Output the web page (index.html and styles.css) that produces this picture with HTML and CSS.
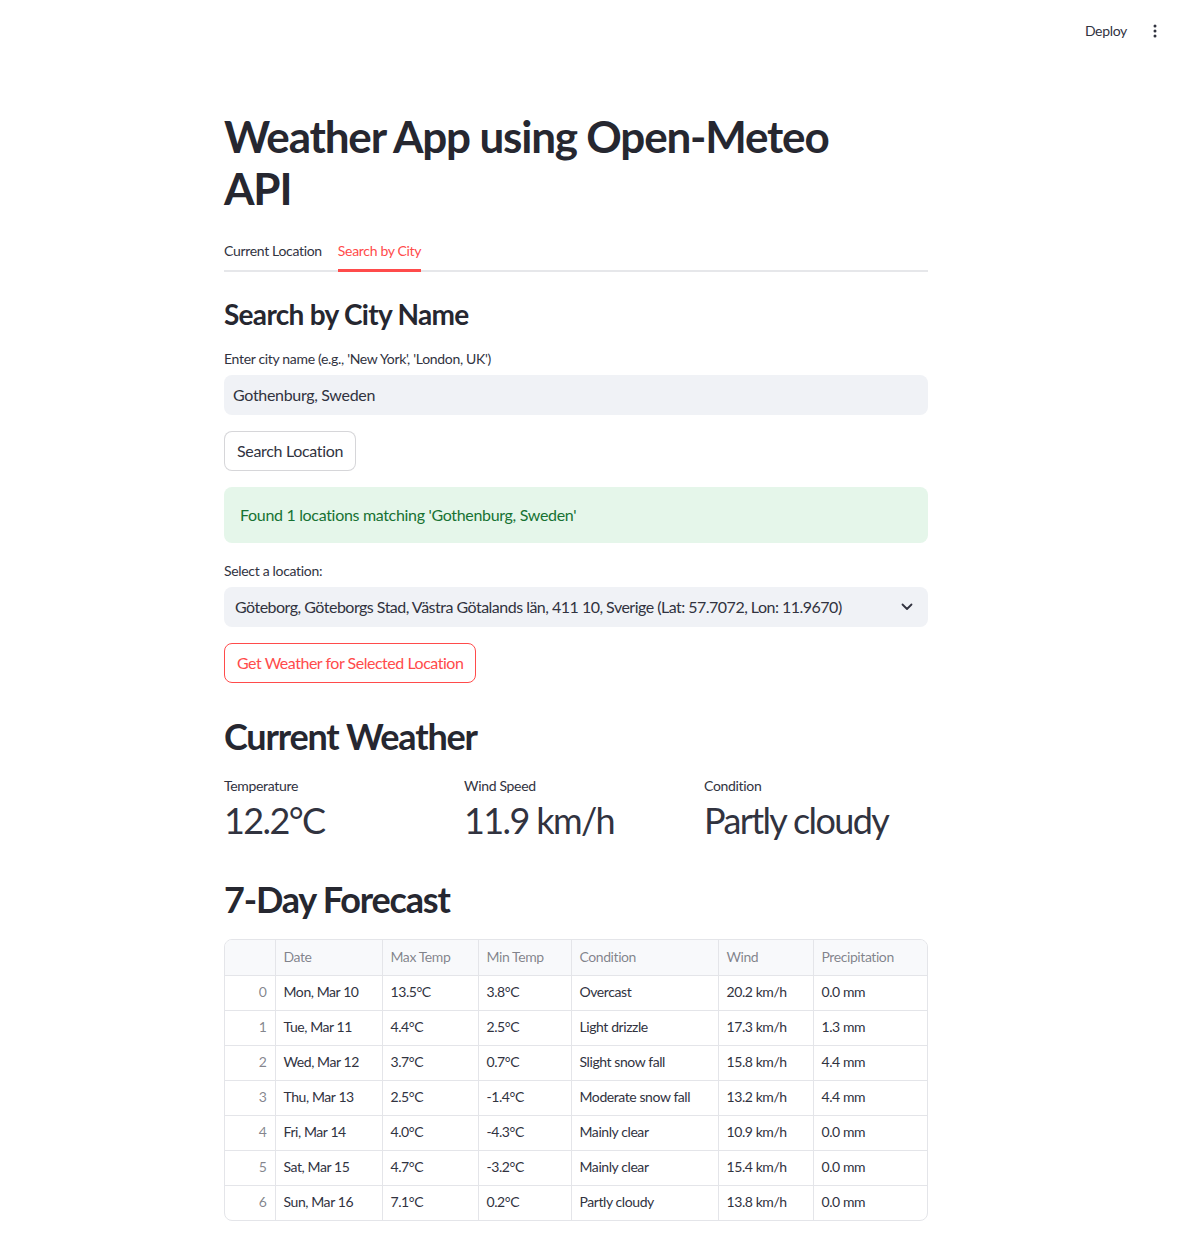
FILE: index.html
```html
<!DOCTYPE html>
<html lang="en">
<head>
<meta charset="utf-8">
<title>Weather App</title>
<link rel="stylesheet" href="styles.css">
</head>
<body>
<header class="topbar">
  <span class="deploy">Deploy</span>
  <span class="kebab" aria-label="menu">
    <svg width="16" height="16" viewBox="0 0 16 16"><circle cx="8" cy="3" r="1.5" fill="#31333f"/><circle cx="8" cy="8" r="1.5" fill="#31333f"/><circle cx="8" cy="13" r="1.5" fill="#31333f"/></svg>
  </span>
</header>
<main class="main">
  <h1 class="title">Weather App using Open-Meteo API</h1>
  <nav class="tabs">
    <span class="tab">Current Location</span>
    <span class="tab active">Search by City</span>
  </nav>
  <h3 class="h3">Search by City Name</h3>
  <label class="label">Enter city name (e.g., 'New York', 'London, UK')</label>
  <div class="input">Gothenburg, Sweden</div>
  <div class="btn-row"><button class="btn">Search Location</button></div>
  <div class="success">Found 1 locations matching 'Gothenburg, Sweden'</div>
  <label class="label label-select">Select a location:</label>
  <div class="select">
    <span class="select-text">Göteborg, Göteborgs Stad, Västra Götalands län, 411 10, Sverige (Lat: 57.7072, Lon: 11.9670)</span>
    <svg class="chev" width="12" height="8" viewBox="0 0 12 8"><path d="M1.5 1.5 L6 6 L10.5 1.5" fill="none" stroke="#31333f" stroke-width="1.8" stroke-linecap="round" stroke-linejoin="round"/></svg>
  </div>
  <div class="btn-row"><button class="btn btn-primary">Get Weather for Selected Location</button></div>
  <h2 class="h2 h2-current">Current Weather</h2>
  <div class="metrics">
    <div class="metric"><div class="m-label">Temperature</div><div class="m-value">12.2°C</div></div>
    <div class="metric"><div class="m-label">Wind Speed</div><div class="m-value">11.9 km/h</div></div>
    <div class="metric"><div class="m-label">Condition</div><div class="m-value">Partly cloudy</div></div>
  </div>
  <h2 class="h2 h2-forecast">7-Day Forecast</h2>
  <div class="table-wrap">
    <table class="table">
      <colgroup>
        <col class="c0"><col class="c1"><col class="c2"><col class="c3"><col class="c4"><col class="c5"><col class="c6">
      </colgroup>
      <thead>
        <tr><th></th><th>Date</th><th>Max Temp</th><th>Min Temp</th><th>Condition</th><th>Wind</th><th>Precipitation</th></tr>
      </thead>
      <tbody>
        <tr><td class="idx">0</td><td>Mon, Mar 10</td><td>13.5°C</td><td>3.8°C</td><td>Overcast</td><td>20.2 km/h</td><td>0.0 mm</td></tr>
        <tr><td class="idx">1</td><td>Tue, Mar 11</td><td>4.4°C</td><td>2.5°C</td><td>Light drizzle</td><td>17.3 km/h</td><td>1.3 mm</td></tr>
        <tr><td class="idx">2</td><td>Wed, Mar 12</td><td>3.7°C</td><td>0.7°C</td><td>Slight snow fall</td><td>15.8 km/h</td><td>4.4 mm</td></tr>
        <tr><td class="idx">3</td><td>Thu, Mar 13</td><td>2.5°C</td><td>-1.4°C</td><td>Moderate snow fall</td><td>13.2 km/h</td><td>4.4 mm</td></tr>
        <tr><td class="idx">4</td><td>Fri, Mar 14</td><td>4.0°C</td><td>-4.3°C</td><td>Mainly clear</td><td>10.9 km/h</td><td>0.0 mm</td></tr>
        <tr><td class="idx">5</td><td>Sat, Mar 15</td><td>4.7°C</td><td>-3.2°C</td><td>Mainly clear</td><td>15.4 km/h</td><td>0.0 mm</td></tr>
        <tr><td class="idx">6</td><td>Sun, Mar 16</td><td>7.1°C</td><td>0.2°C</td><td>Partly cloudy</td><td>13.8 km/h</td><td>0.0 mm</td></tr>
      </tbody>
    </table>
  </div>
</main>
</body>
</html>
```

FILE: styles.css
```css
* { box-sizing: border-box; }
html, body { margin: 0; padding: 0; background: #ffffff; }
body {
  font-family: "Source Sans Pro", "Lato", "Noto Sans", sans-serif;
  color: #31333f;
  width: 1185px;
  min-height: 1234px;
  letter-spacing: -0.02em;
}
.topbar {
  height: 60px;
  display: flex;
  align-items: center;
  justify-content: flex-end;
  padding-right: 22px;
  gap: 20px;
}
.deploy { font-size: 14px; line-height: 20px; margin-top: 1px; }
.kebab { display: flex; width: 16px; height: 16px; margin-top: 2px; }

.main {
  width: 704px;
  margin-left: 224px;
  display: flex;
  flex-direction: column;
  padding-bottom: 14px;
}
.title {
  font-size: 44px;
  font-weight: 700;
  line-height: 52px;
  margin: 50px 0 0 0;
  letter-spacing: -0.027em;
  width: 640px;
  color: #262730;
}
.tabs {
  display: flex;
  gap: 16px;
  margin-top: 18px;
  border-bottom: 2px solid #e6e7ea;
  height: 40px;
}
.tab {
  font-size: 14px;
  line-height: 20px;
  padding-top: 9px;
  height: 40px;
  border-bottom: 2px solid transparent;
  margin-bottom: -2px;
}
.tab.active { color: #ff4b4b; border-bottom: 3px solid #ff4b4b; margin-bottom: -2px; }

.h3 {
  font-size: 28px;
  font-weight: 700;
  line-height: 34px;
  margin: 25px 0 0 0;
  letter-spacing: -0.025em;
  color: #262730;
}
.label {
  font-size: 14px;
  line-height: 20px;
  margin-top: 18px;
  display: block;
}
.label-select { margin-top: 18px; }
.input, .select {
  margin-top: 6px;
  height: 40px;
  background: #f0f2f6;
  border-radius: 8px;
  font-size: 16px;
  line-height: 40px;
  padding-left: 9px;
}
.select {
  display: flex;
  justify-content: space-between;
  align-items: center;
  padding-left: 11px;
  padding-right: 15px;
}
.select-text { letter-spacing: -0.032em; }
.chev { flex: none; }
.btn-row { margin-top: 16px; display: flex; }
.btn {
  font-family: inherit;
  font-size: 16px;
  letter-spacing: -0.02em;
  height: 40px;
  padding: 0 12px 2px;
  background: #ffffff;
  color: #31333f;
  border: 1px solid rgba(49, 51, 63, 0.2);
  border-radius: 8px;
}
.btn-primary { color: #ff4b4b; border-color: #ff4b4b; letter-spacing: -0.03em; }
.success {
  margin-top: 16px;
  height: 56px;
  border-radius: 8px;
  background: #e5f6ea;
  color: #177233;
  font-size: 16px;
  line-height: 56px;
  padding-left: 16px;
}
.h2 {
  font-size: 36px;
  font-weight: 700;
  line-height: 43px;
  margin: 32px 0 0 0;
  letter-spacing: -0.033em;
  color: #262730;
}
.h2-forecast { margin-top: 36px; }
.metrics {
  display: grid;
  grid-template-columns: repeat(3, 1fr);
  gap: 16px;
  margin-top: 18px;
}
.m-label { font-size: 14px; line-height: 20px; }
.m-value { font-size: 36px; line-height: 44px; margin-top: 2px; letter-spacing: -0.045em; }

.table-wrap {
  margin-top: 18px;
  border: 1px solid #e4e5e9;
  border-radius: 8px;
  overflow: hidden;
}
.table {
  width: 100%;
  border-collapse: collapse;
  table-layout: fixed;
  font-size: 14px;
  letter-spacing: -0.03em;
}
.c0 { width: 50px; }
.c1 { width: 107px; }
.c2 { width: 96px; }
.c3 { width: 93px; }
.c4 { width: 147px; }
.c5 { width: 95px; }
.c6 { width: auto; }
.table th, .table td {
  text-align: left;
  padding: 0 8px 2px;
  border-right: 1px solid #e4e5e9;
  border-bottom: 1px solid #e4e5e9;
  white-space: nowrap;
  overflow: hidden;
}
.table th:last-child, .table td:last-child { border-right: none; }
.table tbody tr:last-child td { border-bottom: none; }
.table th {
  height: 35px;
  background: #f8f9fb;
  font-weight: 400;
  color: rgba(49, 51, 63, 0.6);
}
.table td { height: 35px; }
.table td.idx { text-align: right; color: rgba(49, 51, 63, 0.6); }
```
